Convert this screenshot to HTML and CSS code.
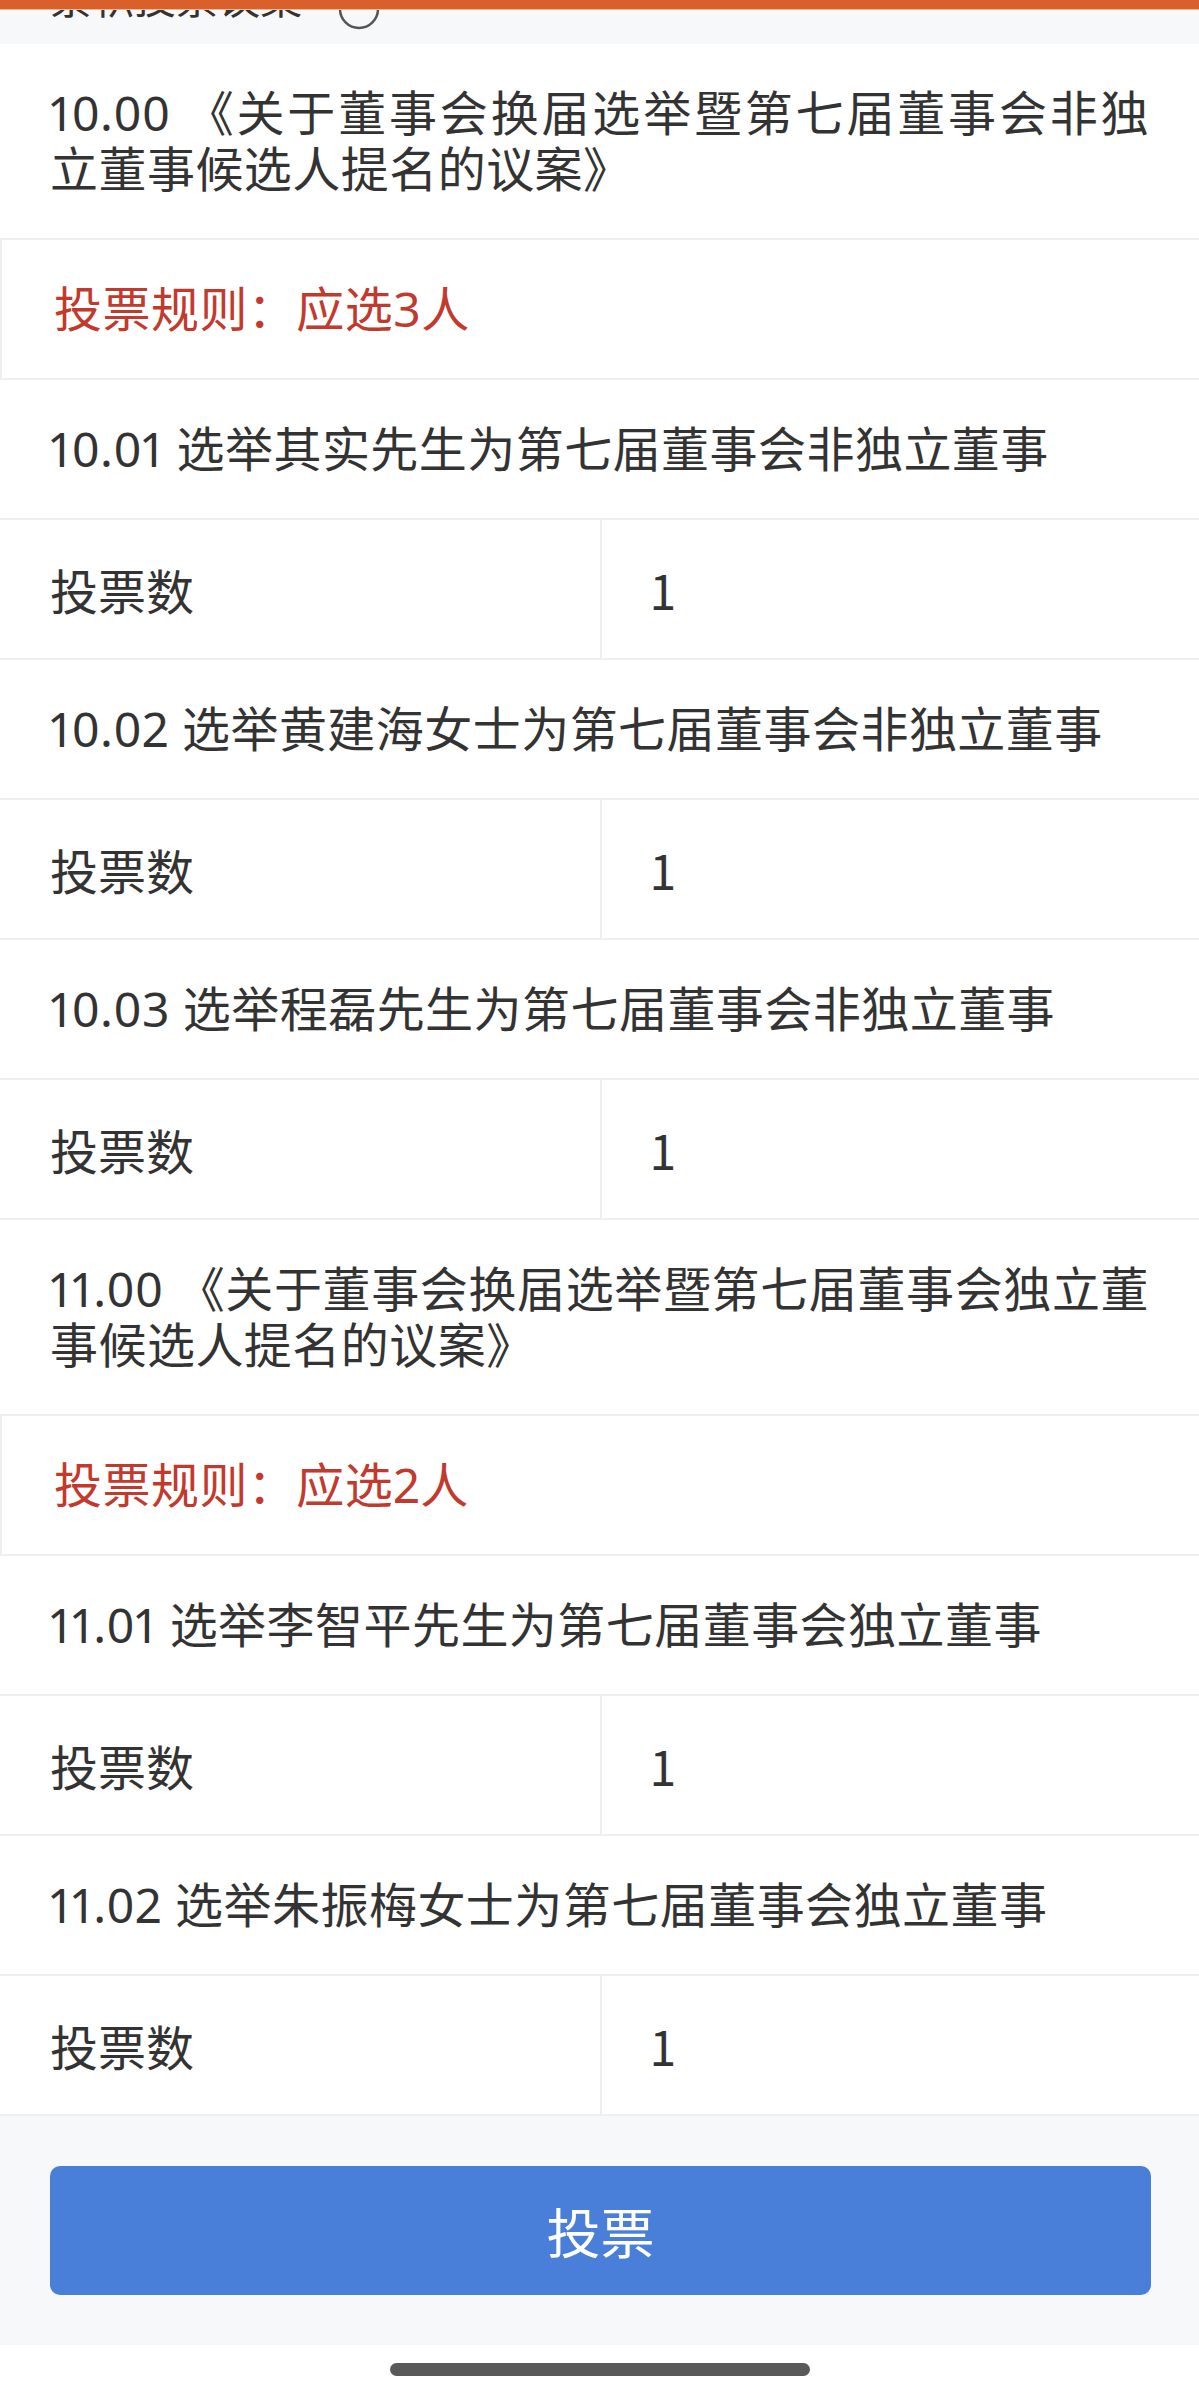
FILE: index.html
```html
<!DOCTYPE html>
<html lang="zh-CN">
<head>
    <meta charset="UTF-8">
    <meta name="viewport" content="width=device-width, initial-scale=1.0">
    <title>累积投票</title>
    <link rel="stylesheet" href="styles.css">
</head>
<body>
    <div class="topbar"></div>

    <div class="section-peek">
        <div class="peek-inner">
            <span>累积投票议案</span>
            <svg class="help-icon" width="42" height="42" viewBox="0 0 42 42">
                <circle cx="21" cy="21" r="19" fill="none" stroke="#555" stroke-width="2.5"/>
            </svg>
        </div>
    </div>

    <div class="list">
        <div class="item item-title">10.00 《关于董事会换届选举暨第七届董事会非独立董事候选人提名的议案》</div>
        <div class="item item-rule">投票规则：应选3人</div>

        <div class="item">10.01 选举其实先生为第七届董事会非独立董事</div>
        <div class="vote-row">
            <div class="cell">投票数</div>
            <div class="cell cell-value">1</div>
        </div>

        <div class="item">10.02 选举黄建海女士为第七届董事会非独立董事</div>
        <div class="vote-row">
            <div class="cell">投票数</div>
            <div class="cell cell-value">1</div>
        </div>

        <div class="item">10.03 选举程磊先生为第七届董事会非独立董事</div>
        <div class="vote-row">
            <div class="cell">投票数</div>
            <div class="cell cell-value">1</div>
        </div>

        <div class="item item-title">11.00 《关于董事会换届选举暨第七届董事会独立董事候选人提名的议案》</div>
        <div class="item item-rule">投票规则：应选2人</div>

        <div class="item">11.01 选举李智平先生为第七届董事会独立董事</div>
        <div class="vote-row">
            <div class="cell">投票数</div>
            <div class="cell cell-value">1</div>
        </div>

        <div class="item">11.02 选举朱振梅女士为第七届董事会独立董事</div>
        <div class="vote-row">
            <div class="cell">投票数</div>
            <div class="cell cell-value">1</div>
        </div>
    </div>

    <div class="footer">
        <button type="button" class="btn-vote">投票</button>
    </div>

    <div class="home-area">
        <span class="home-bar"></span>
    </div>
</body>
</html>
```

FILE: styles.css
```css
body {
    font-family: "Noto Sans CJK SC", "Noto Sans", sans-serif;
    margin: 0;
    padding: 0;
    background-color: #fff;
    color: #333;
}

.topbar {
    height: 9px;
    background-color: #d9602a;
    border-bottom: 1px solid #f2b48f;
}

.section-peek {
    height: 34px;
    overflow: hidden;
    background-color: #f7f8fa;
}

.peek-inner {
    display: flex;
    align-items: center;
    gap: 36px;
    margin-top: -30px;
    padding-left: 50px;
    font-size: 42px;
    line-height: 42px;
    color: #333;
}

.peek-inner span {
    margin-top: -18px;
}

.help-icon {
    margin-top: 8px;
}

.item {
    padding: 41px 50px;
    font-family: "Noto Sans", "Noto Sans CJK SC", sans-serif;
    font-size: 48px;
    line-height: 56px;
    letter-spacing: 0.46px;
    font-variant-numeric: proportional-nums;
    border-bottom: 2px solid #efefef;
}

.item-title {
    text-align: justify;
}

.item-rule {
    padding-left: 52px;
    border-left: 2px solid #efefef;
    color: #c23a2e;
}

.vote-row {
    display: grid;
    grid-template-columns: 1fr 1fr;
    border-bottom: 2px solid #efefef;
}

.cell {
    padding: 41px 50px;
    font-size: 48px;
    line-height: 56px;
}

.cell-value {
    padding-left: 48px;
    border-left: 2px solid #efefef;
}

.footer {
    background-color: #f7f8fa;
    padding: 50px 48px 50px 50px;
}

.btn-vote {
    display: block;
    width: 100%;
    height: 129px;
    border: none;
    border-radius: 10px;
    background-color: #4a7fd9;
    color: #fff;
    font-family: "Noto Sans CJK SC", sans-serif;
    font-size: 54px;
    cursor: pointer;
}

.home-area {
    height: 51px;
    display: flex;
    justify-content: center;
    padding-top: 18px;
    box-sizing: border-box;
}

.home-bar {
    width: 420px;
    height: 13px;
    border-radius: 7px;
    background-color: #595959;
}
```
